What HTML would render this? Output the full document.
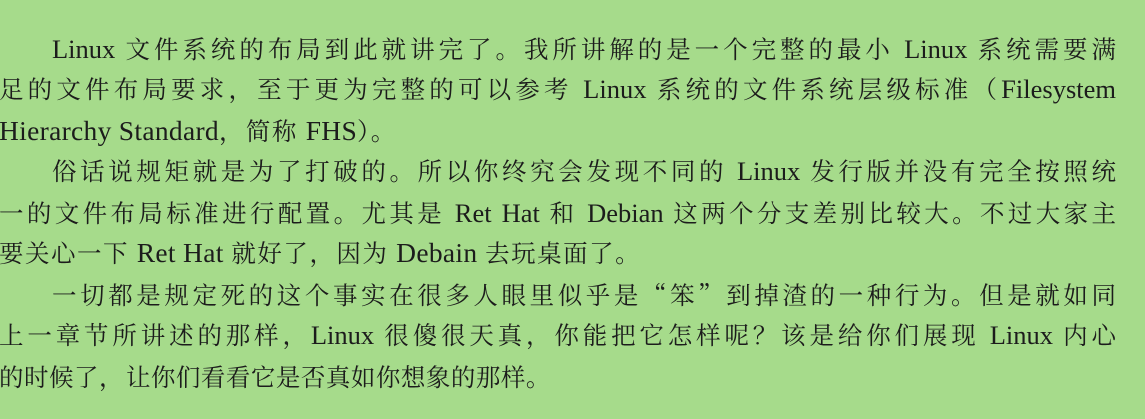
<!DOCTYPE html>
<html><head><meta charset="utf-8"><style>
html,body{margin:0;padding:0;width:1145px;height:419px;overflow:hidden;background:#a6db8b;}
.l{position:absolute;left:-1px;width:1117px;height:41px;line-height:41px;font-family:"Noto Serif CJK SC","Liberation Serif",serif;font-size:24.5px;color:#1c1c1c;text-align:justify;text-align-last:justify;white-space:nowrap;}
.l.i{left:52px;width:1064px;}
.l.e{text-align-last:left;letter-spacing:1.5px;}
.l b{font-weight:normal;font-family:"Liberation Serif",serif;font-size:26.5px;letter-spacing:0;}
.l.e b{font-size:27.5px;letter-spacing:0.3px;}
.c{display:inline-block;width:1.1em;text-align:left;}
</style></head><body>
<div class="l i" style="top:28px"><b>Linux</b> 文件系统的布局到此就讲完了。我所讲解的是一个完整的最小 <b>Linux</b> 系统需要满</div>
<div class="l" style="top:68px">足的文件布局要求，至于更为完整的可以参考 <b>Linux</b> 系统的文件系统层级标准（<b>Filesystem</b></div>
<div class="l e" style="top:110px"><b>Hierarchy Standard</b><span class="c">，</span>简称 <b>FHS</b>）。</div>
<div class="l i" style="top:150px">俗话说规矩就是为了打破的。所以你终究会发现不同的 <b>Linux</b> 发行版并没有完全按照统</div>
<div class="l" style="top:192px">一的文件布局标准进行配置。尤其是 <b>Ret Hat</b> 和 <b>Debian</b> 这两个分支差别比较大。不过大家主</div>
<div class="l e" style="top:232px">要关心一下 <b>Ret Hat</b> 就好了<span class="c">，</span>因为 <b>Debain</b> 去玩桌面了。</div>
<div class="l i" style="top:274px">一切都是规定死的这个事实在很多人眼里似乎是“笨”到掉渣的一种行为。但是就如同</div>
<div class="l" style="top:314px">上一章节所讲述的那样，<b>Linux</b> 很傻很天真，你能把它怎样呢？该是给你们展现 <b>Linux</b> 内心</div>
<div class="l e" style="top:356px;letter-spacing:0.5px">的时候了<span class="c">，</span>让你们看看它是否真如你想象的那样。</div>
</body></html>
